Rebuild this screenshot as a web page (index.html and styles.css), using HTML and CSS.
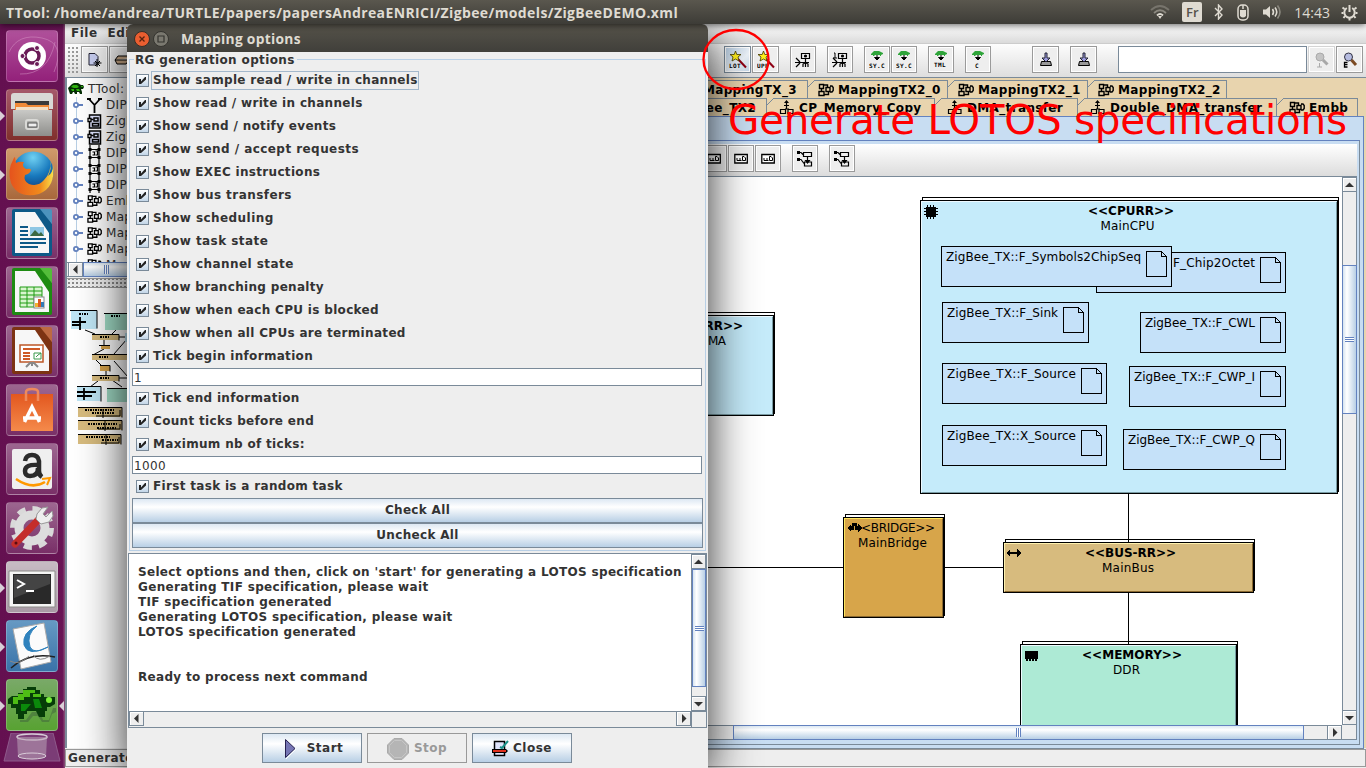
FILE: index.html
```html
<!DOCTYPE html>
<html lang="en">
<head>
<meta charset="utf-8">
<title>TTool - Mapping options</title>
<link rel="stylesheet" href="styles.css">
</head>
<body>
<svg class="defs" width="0" height="0">
  <defs>
    <linearGradient id="drawer" x1="0" y1="0" x2="0" y2="1"><stop offset="0" stop-color="#c9c9c6"/><stop offset="1" stop-color="#8e8e8b"/></linearGradient>
    <radialGradient id="globe" cx=".5" cy=".15" r=".9"><stop offset="0" stop-color="#6fd0f2"/><stop offset=".5" stop-color="#1879bd"/><stop offset="1" stop-color="#0b2c6b"/></radialGradient>
    <linearGradient id="fox" x1="0" y1="0" x2="1" y2="0"><stop offset="0" stop-color="#e5531d"/><stop offset=".7" stop-color="#f08a1c"/><stop offset="1" stop-color="#fbe14b"/></linearGradient>
    <linearGradient id="bag" x1="0" y1="0" x2="0" y2="1"><stop offset="0" stop-color="#e2571f"/><stop offset="1" stop-color="#f58a4b"/></linearGradient>
  </defs>
  <symbol id="check" viewBox="0 0 11 11"><path d="M2 4h2v2.500L8 2h1v2.500L4 9H2z" fill="#222"/></symbol>
  <symbol id="map" viewBox="0 0 16 14"><path d="M1.500 1.500h4v4h-4zM1 8.500h5v4H1zM3.500 5.500v3M5.500 2h4v2.500M6 11.500h4.500V9M8 4.500h4v4H8zM12 3h2l1.200 1.500v3L14 9h-2" fill="none" stroke="#000" stroke-width="1.400"/></symbol>
  <symbol id="act" viewBox="0 0 16 16"><path d="M7.500 1v8M5 5.500h5M1.500 9.500h5v4h-5zM9 9.500h5v4H9zM6 9h4" fill="none" stroke="#000" stroke-width="1.200"/><path d="M7.500 0l2.500 3H5z"/></symbol>
  <symbol id="knob" viewBox="0 0 10 8"><circle cx="3" cy="4" r="2.100" fill="#fff" stroke="#6382bf" stroke-width="1.800"/><path d="M5 4h5" stroke="#6382bf" stroke-width="2"/></symbol>
  <symbol id="turtle" viewBox="0 0 16 12"><path d="M0 5l2-2 2-2 2-1h4l3 2h2l1 2-1 2h-2l1 3v2h-2l-1-2H9v2H7L6 9H5l-1 2H2L1 8z" fill="#063006"/><path d="M3 4l2-2h4l2 2-2 1H6zM13 3h2v1h-2zM3 6h3v2H4zM8 6h3l1 2H9z" fill="#2fb30f"/></symbol>
  <symbol id="req" viewBox="0 0 14 16"><path d="M2.500 0v16M11.500 0v16M2 4.500h10M2 12.500h10M5 7h2v3H5M8 6h2v4H8" fill="none" stroke="#000" stroke-width="1.200"/><path d="M1 3h3v3H1zM10 3h3v3h-3zM1 11h3v3H1zM10 11h3v3h-3z"/></symbol>
  <symbol id="cls" viewBox="0 0 14 15"><path d="M2 1h11v13H2zM5 9.500h6V12H5zM6.500 4h4v3h-4z" fill="#dfe4ff" stroke="#000" stroke-width="1.500"/><path d="M.5 4.500h3v3h-3zM3 5.500h3" stroke="#000" fill="#fff" stroke-width="1.300"/></symbol>
  <symbol id="cgen" viewBox="0 0 16 16"><path d="M2 4l2-2 1-1h5l2 1 2 1v1l-2 1v1h-1V5H6L5 6H4V5H2z" fill="#2fa53a"/><path d="M8 5v2M5.500 7.500L8 10l2.500-2.500z" stroke="#000" fill="#000"/></symbol>
  <symbol id="sim" viewBox="0 0 16 16"><path d="M6.500 1.500h8v5h-8zM10.500 7v8M4 10.500h10M1 6l4 4M1 15l4-4M0 10.500h4M8 15v-3l2-1M13 15v-3l-2-1" fill="none" stroke="#000" stroke-width="1.200"/><circle cx="10.500" cy="4" r="1.600"/></symbol>
  <symbol id="save" viewBox="0 0 14 16"><path d="M2.500 9.500h9l1 4h-11z" fill="#999" stroke="#000"/><path d="M6 1h2v5h3l-4 4-4-4h3z" fill="#9c9ce0" stroke="#223"/></symbol>
  <symbol id="art" viewBox="0 0 14 12"><path d="M.8 1.500h12.500v8.500H.8z" fill="#fff" stroke="#000" stroke-width="1.300"/><path d="M3 5v2.500h3V5M8.500 3.500v4h3V5l-1.500-1.500zM6 7.500h1.500" fill="none" stroke="#000"/></symbol>
  <symbol id="link" viewBox="0 0 16 16"><path d="M6.500 1.500h8v4h-8zM7.500 11h7v4h-7zM1 1.500h3l2 2M1 8.500h3l3 4M10.500 6v6" fill="none" stroke="#000" stroke-width="1.200"/><path d="M0 0h3v3H0zM0 7h3v3H0zM7.500 9h6l-3 4z"/></symbol>
  <symbol id="find" viewBox="0 0 16 16"><circle cx="6.500" cy="5" r="4" fill="#b6bce0" stroke="#334"/><path d="M9.500 8l4.500 5" stroke="#7b4a22" stroke-width="3"/><path d="M5.500 10.500H2.500v4.500h3M2.500 12.700h3" fill="none" stroke="#000" stroke-width="1.300"/></symbol>
  <symbol id="findgray" viewBox="0 0 16 16"><circle cx="6" cy="5" r="4" fill="#c4c4c4" stroke="#aaa"/><path d="M9 8l4.500 4.500" stroke="#a8a8a8" stroke-width="3"/><path d="M3 15h5M5.500 11v4" stroke="#aaa"/></symbol>
  <symbol id="star" viewBox="0 0 18 18"><path d="M9 8l8 8.500" stroke="#8e0014" stroke-width="2"/><path d="M6.500 0l1.300 3.500H12L9 6l1 4-3.500-2L3 10l1-4-3-2.500h4.200z" fill="#ffee1c" stroke="#443800" stroke-width=".8"/></symbol>
  <symbol id="up" viewBox="1 1 13 13"><path d="M3 10h9L7.500 5.500z" fill="#333"/></symbol>
  <symbol id="down" viewBox="1 1 13 13"><path d="M3 6h9l-4.500 4.500z" fill="#333"/></symbol>
  <symbol id="left" viewBox="1 1 13 13"><path d="M9.500 3v9L5 7.500z" fill="#333"/></symbol>
  <symbol id="right" viewBox="1 1 13 13"><path d="M6 3v9l4.500-4.500z" fill="#333"/></symbol>
  <symbol id="page" viewBox="0 0 22 26"><path d="M.5.5h15l5 5v20h-20zM15.500.5v5h5" fill="none" stroke="#000"/></symbol>
</svg>

<header class="panel">
  <span class="panel-title">TTool: /home/andrea/TURTLE/papers/papersAndreaENRICI/Zigbee/models/ZigBeeDEMO.xml</span>
  <div class="tray">
    <svg class="wifi" width="20" height="14" viewBox="0 0 20 14" fill="none" stroke-width="1.800"><path d="M1 5q9-8 18 0" stroke="#77746c"/><path d="M4 8q6-5.500 12 0" stroke="#8b887f"/><path d="M7 10.500q3-3 6 0" stroke="#dfdbd2"/><path d="M8 11h4l-2 3z" fill="#dfdbd2"/></svg>
    <span class="lang">Fr</span>
    <svg class="bt" width="10" height="16" viewBox="0 0 10 16" fill="none" stroke="#dfdbd2" stroke-width="1.400"><path d="M1 4l7 7-3.500 4V1L8 5l-7 7"/></svg>
    <svg class="mouse" width="12" height="17" viewBox="0 0 12 17"><rect x="1" y="1" width="10" height="15" rx="4" fill="none" stroke="#dfdbd2" stroke-width="1.500"/><path d="M3 6h6v6q-3 3-6 0z" fill="#dfdbd2"/><path d="M6 1v4" stroke="#dfdbd2" stroke-width="1.500"/></svg>
    <svg class="vol" width="20" height="16" viewBox="0 0 20 16"><path d="M1 5.500h3L8 2v12l-4-3.500H1z" fill="#dfdbd2"/><path d="M10.500 5q2 3 0 6M13 3.500q3.500 4.500 0 9" fill="none" stroke="#dfdbd2" stroke-width="1.600"/><path d="M15.500 1.500q5 6.500 0 13" fill="none" stroke="#8b887f" stroke-width="1.600"/></svg>
    <span class="clock">14:43</span>
    <svg class="gear" width="17" height="17" viewBox="0 0 17 17" fill="none" stroke="#dfdbd2"><path d="M5.800 4a5.200 5.200 0 1 0 5.400 0M8.500 1v7" stroke-width="2"/><path d="M3.500 5L1.500 3.500M2.500 9H.5M4 12l-1.500 2M8.500 14v2.500M13 12l1.500 2M14.500 9h2M13.500 5l2-1.500" stroke-width="2"/></svg>
  </div>
</header>

<nav class="launcher">
  <div class="tile t-dash"><svg viewBox="0 0 52 52"><path d="M3 22Q12 3 36 8T48 42M49 12Q42 45 14 44" fill="none" stroke="#d595c5" opacity=".5"/><circle cx="26" cy="26" r="14" fill="#fff"/><circle cx="26" cy="26" r="7" fill="none" stroke="#6a1b57" stroke-width="3.500"/><g fill="#6a1b57" stroke="#fff"><circle cx="16.500" cy="26" r="2.500"/><circle cx="31" cy="18" r="2.500"/><circle cx="31" cy="34" r="2.500"/></g></svg></div>
  <div class="tile t-files run"><svg viewBox="0 0 52 52"><path d="M5 7q0-3 3-3h36q3 0 3 3v13H5z" fill="#d9d9d6"/><path d="M9 12h34v9H9z" fill="#3a3a3a"/><path d="M9 14h11l2 2h21v6H9z" fill="#f08a38"/><path d="M10 18h32v3H10z" fill="#f2dfc6"/><path d="M7 21h39v26H7z" fill="url(#drawer)"/><rect x="20" y="31" width="12" height="9" rx="2" fill="none" stroke="#d9d9d6" stroke-width="2"/><rect x="22" y="34" width="9" height="4" fill="#eee" stroke="#555"/></svg></div>
  <div class="tile t-fox run"><svg viewBox="0 0 52 52"><circle cx="27" cy="24" r="20.500" fill="url(#globe)"/><path d="M44 12q2 9-2 16 5-3 5-11 3 22-14 29Q12 51 5 35 1 22 7 12q1-3 2-3l1 6q3-2 8-1-3 4 2 7 5-1 5 1-1 4-6 5-2 6 4 9 9 3 15-4 8-8 6-20z" fill="url(#fox)"/></svg></div>
  <div class="tile"><svg viewBox="0 0 52 52"><path d="M8 2h28l10 15v30q0 2-2 2H8q-2 0-2-2V4q0-2 2-2z" fill="#0d5987"/><path d="M34 2h10q2 0 2 2v13z" fill="#4b93bd"/><path d="M9 5h20l14 21v20H9z" fill="#f7f7f7"/><path d="M14 20h8M14 24h8M14 28h8M14 32h26M14 36h26M14 40h18" stroke="#0d5987" stroke-width="2"/><rect x="24" y="20" width="14" height="9" fill="#8fc7e4"/><path d="M24 29l5-6 4 4 2-2 3 4z" fill="#3d6941"/></svg></div>
  <div class="tile"><svg viewBox="0 0 52 52"><path d="M8 2h28l10 15v30q0 2-2 2H8q-2 0-2-2V4q0-2 2-2z" fill="#1e8b12"/><path d="M34 2h10q2 0 2 2v13z" fill="#54bd3a"/><path d="M9 5h20l14 21v20H9z" fill="#f7f7f7"/><path d="M14 21h22v20H14zM14 25h22M14 29h22M14 33h22M14 37h22M21 21v20M28 21v20" fill="#d9f5cf" stroke="#1e9b12"/><rect x="28" y="31" width="10" height="11" fill="#fff" stroke="#888"/><path d="M29 37h3v4h-3z" fill="#f0b32e"/><path d="M32 33h3v8h-3z" fill="#dc5a22"/><path d="M35 36h3v5h-3z" fill="#317ab5"/></svg></div>
  <div class="tile"><svg viewBox="0 0 52 52"><path d="M8 2h28l10 15v30q0 2-2 2H8q-2 0-2-2V4q0-2 2-2z" fill="#7d3313"/><path d="M34 2h10q2 0 2 2v13z" fill="#bd6a42"/><path d="M9 5h20l14 21v20H9z" fill="#f7f7f7"/><rect x="14" y="20" width="23" height="17" fill="#fff" stroke="#bd5727" stroke-width="1.500"/><path d="M17 24h17M17 28h7M17 31h7M17 34h7" stroke="#cf5a26" stroke-width="2"/><path d="M28 34v-6h7v6zM30 32l2-2 3-2" fill="#fff" stroke="#3b9a4d"/><path d="M26 37v4M20 42l4-4h4l4 4" stroke="#888" stroke-width="2" fill="none"/></svg></div>
  <div class="tile"><svg viewBox="0 0 52 52"><path d="M5 10h42v37H5z" fill="url(#bag)"/><path d="M20 17V8q0-3 6-3t6 3v9" fill="none" stroke="#ee8a5c" stroke-width="2.500"/><path d="M18.500 38l7.500-15 7.500 15M17 34h18" fill="none" stroke="#fff" stroke-width="3.500"/></svg></div>
  <div class="tile"><svg viewBox="0 0 52 52"><rect x="6" y="6" width="40" height="40" rx="2" fill="#efefef"/><path d="M19 18q1-6 7-6t7 6v10q0 4 3 6M32 22q-13-1-13 6 0 5 5 5 8 0 8-8" fill="none" stroke="#2b2b2b" stroke-width="4.500"/><path d="M10 36q16 11 29 3" fill="none" stroke="#f90" stroke-width="2.500"/><path d="M36 36l8-1-3 7" fill="none" stroke="#f90" stroke-width="2"/></svg></div>
  <div class="tile"><svg viewBox="0 0 52 52"><circle cx="26" cy="26" r="19" fill="none" stroke="#d9d9d9" stroke-width="6" stroke-dasharray="8 6.900"/><circle cx="26" cy="26" r="13" fill="none" stroke="#ddd" stroke-width="9"/><path d="M9 42l26-27" stroke="#c42d2a" stroke-width="7" stroke-linecap="round"/><path d="M30 17l5 5 8-2 4-6-1-5-6 6-3-3 5-7-6 1-5 6z" fill="#eee" stroke="#999"/><circle cx="10" cy="41" r="1.500" fill="#5a0b10"/></svg></div>
  <div class="tile t-term run"><svg viewBox="0 0 52 52"><path d="M3 10h46v36H3z" fill="#f5f5f4" stroke="#8b8b88"/><path d="M7 13h38v30H7z" fill="#292929"/><path d="M8 14h36v9L8 37z" fill="#444"/><path d="M11 19l7 4-7 4M20 30h8" fill="none" stroke="#fff" stroke-width="2"/></svg></div>
  <div class="tile t-doc run"><svg viewBox="0 0 52 52"><path d="M7 9l31-6 7 39-30 7z" fill="#fbfbfb" stroke="#aaa"/><path d="M31 6Q16 12 18 25q4 12 24 2-14 8-18 0-4-13 7-21z" fill="#2f82bd" stroke="#2f82bd"/><path d="M5 48Q22 32 49 37" fill="none" stroke="#222" stroke-width="1.500"/><path d="M4 41q5 3 10 1t9-6M27 35q6 8 17 1" fill="none" stroke="#888"/></svg></div>
  <div class="tile t-ttool run active"><svg viewBox="0 0 52 52"><path d="M14 41h6l6-8h8l3 8h6l4-12h3v4l-4 2-3 8h-7l-4-6h-5l-5 6h-8z" fill="#456d3c" opacity=".6"/><path d="M2 20l4-3h6v-3h5v-4h4V8h9v3h4v4h4v3h11v7l-5 3h-3v4h-2v6h-6l-3-6h-9v3h-3v5h-6v-5h-2v-6H5v-4H2z" fill="#063d08"/><path d="M7 18h5v-3h5v-4h12v3h-5v4h-6v3h-6v4H7zM27 15h8v3h-8z" fill="#4ebd15"/><path d="M15 25h10l-6 7h-4zM27 20h6l3 9h-7z" fill="#0b8a0b"/><circle cx="43" cy="21" r="3" fill="#7cf13a"/></svg></div>
  <div class="trash"><svg viewBox="0 0 58 30"><path d="M8 0h42l7 28H1z" fill="#7b3c76" stroke="#8f5a8b"/><ellipse cx="29" cy="4" rx="15" ry="3" fill="none" stroke="#d9cbd8" stroke-width="1.500"/><path d="M14 4l1 20q14 5 28 0l1-20" fill="#b9a3b7" opacity=".55"/><ellipse cx="29" cy="23" rx="14" ry="3" fill="none" stroke="#d9cbd8"/></svg></div>
</nav>

<main class="app">
  <div class="menubar"><span>File</span><span>Edit</span></div>
  <div class="toolbar">
    <i class="grip"></i>
    <button class="tb"><svg width="15" height="16" viewBox="0 0 15 16"><path d="M2 1.500h6l3 3V13H2z" fill="#c7cdf0" stroke="#223"/><path d="M10 7v8M6.500 11h8M8 9l5 5M13 9l-5 5" stroke="#000"/></svg></button>
    <button class="tb"><svg width="18" height="14" viewBox="0 0 18 14"><path d="M1 7l3-4h12v2M1 7h14l-3 4H3z" fill="#c9a987" stroke="#000"/></svg></button>
    <div class="tools">
      <button class="tb hot"><svg width="18" height="18"><use href="#star"/><text x="0" y="17" class="tiny">LOT</text></svg></button>
      <button class="tb g11"><svg width="18" height="18"><use href="#star"/><text x="0" y="17" class="tiny">UPP</text></svg></button>
      <button class="tb n g11"><svg width="16" height="16"><use href="#sim"/></svg></button>
      <button class="tb n g11"><svg width="16" height="16"><use href="#sim"/><path d="M2 1h1v5M1 6h4" fill="none" stroke="#000"/></svg></button>
      <button class="tb n"><svg width="16" height="18"><use href="#cgen" y="-1" height="16"/><text x="0" y="17" class="tiny">SY.C</text></svg></button>
      <button class="tb n g11"><svg width="16" height="18"><use href="#cgen" y="-1" height="16"/><text x="0" y="17" class="tiny">SY.C</text></svg></button>
      <button class="tb n g11"><svg width="16" height="18"><use href="#cgen" y="-1" height="16"/><text x="1" y="16" class="tiny">TML</text></svg></button>
      <button class="tb n g41"><svg width="16" height="18"><use href="#cgen" y="-1" height="16"/><text x="5" y="17" class="tiny">C</text></svg></button>
      <button class="tb g11"><svg width="14" height="16"><use href="#save"/></svg></button>
      <button class="tb g21"><svg width="14" height="16"><use href="#save"/></svg></button>
      <input class="search" aria-label="Search">
      <button class="tb off"><svg width="16" height="16"><use href="#findgray"/></svg></button>
      <button class="tb"><svg width="16" height="16"><use href="#find"/></svg></button>
    </div>
  </div>

  <div class="split">
    <aside class="side">
      <div class="tree">
        <div class="root"><svg width="16" height="12"><use href="#turtle"/></svg>TTool: models</div>
        <div class="node"><svg width="10" height="8"><use href="#knob"/></svg><svg width="15" height="15" viewBox="0 0 15 15"><path d="M0 1h4M11 1h4M2 1l5.500 6L13 1M7.500 7v8" fill="none" stroke="#000" stroke-width="1.800"/></svg>DIPLODOCUS</div>
        <div class="node"><svg width="10" height="8"><use href="#knob"/></svg><svg width="15" height="15"><use href="#cls"/></svg>ZigBee_TX</div>
        <div class="node"><svg width="10" height="8"><use href="#knob"/></svg><svg width="15" height="15"><use href="#cls"/></svg>ZigBee_TX2</div>
        <div class="node"><svg width="10" height="8"><use href="#knob"/></svg><svg width="15" height="16"><use href="#req"/></svg>DIPLODOCUS</div>
        <div class="node"><svg width="10" height="8"><use href="#knob"/></svg><svg width="15" height="16"><use href="#req"/></svg>DIPLODOCUS</div>
        <div class="node"><svg width="10" height="8"><use href="#knob"/></svg><svg width="15" height="16"><use href="#req"/></svg>DIPLODOCUS</div>
        <div class="node"><svg width="10" height="8"><use href="#knob"/></svg><svg width="15" height="14"><use href="#map"/></svg>Embb</div>
        <div class="node"><svg width="10" height="8"><use href="#knob"/></svg><svg width="15" height="14"><use href="#map"/></svg>MappingTX</div>
        <div class="node"><svg width="10" height="8"><use href="#knob"/></svg><svg width="15" height="14"><use href="#map"/></svg>MappingTX_0</div>
        <div class="node"><svg width="10" height="8"><use href="#knob"/></svg><svg width="15" height="14"><use href="#map"/></svg>MappingTX_1</div>
        <div class="node"><svg width="10" height="8"><use href="#knob"/></svg><svg width="15" height="14"><use href="#map"/></svg>MappingTX_2</div>
      </div>
      <div class="hbar"><svg class="arrow" width="15" height="15"><use href="#left"/></svg><div class="thumb side-thumb"><i class="ticks-h"></i></div></div>
      <div class="divider"></div>
      <div class="birdview">
        <svg width="62" height="190" viewBox="67 289 62 190">
          <path d="M85 331l10 4M116 331l-4 4M104 341v5M104 350l-11 6M127 340l-13 15M96 361l6 6M106 371v5M114 362l14 16M98 382l-8 6M112 381l10 7M119 338h6M119 379h9" stroke="#000" fill="none"/>
          <g fill="#bfe6f5"><path d="M71 311h26v19H71zM77 387h24v15H77zM125 334h5v9h-5z"/></g>
          <g fill="#a1dcc6"><path d="M105 314h25v17h-25zM107 389h23v14h-23z"/></g>
          <g fill="#d7bb7e"><path d="M92 335h27v6H92zM92 355h38v6H92zM92 376h27v6H92zM78 408h44v10H78zM78 421h44v10H78zM78 435h43v10H78z"/></g>
          <path d="M101 346h9v4h-9zM100 366h10v6h-10z" fill="#d7a44b"/>
          <path d="M70 311.500h27v18M104 314.500h26M77 387.500h24v15M107 389.500h23M92 335.500h27v6M92 355.500h38M92 376.500h27v6M78 408.500h44v10M78 421.500h44v10M78 435.500h43v10M99 346.500h11M100 366.500h10v6M96 417h24v-6M98 430h22v-5M101 444h18v-6M103 410v9M105 422v10M106 436v10" fill="none" stroke="#000"/>
          <path d="M72 323h14M72 326h9M80 318v13M77 393h19M77 397h15M84 389v12" stroke="#000" stroke-width="1.800"/>
          <path d="M79 315h9M111 317h9M100 338h9M99 358h10M100 379h9M85 411h30M88 425h30M86 438h24M92 414h23M97 429h20M102 441h16" stroke="#000" stroke-width="2" stroke-dasharray="2 1 1 1"/>
        </svg>
      </div>
    </aside>

    <section class="work">
      <div class="tabs row1">
        <div class="tab"><svg width="16" height="14"><use href="#map"/></svg>MappingTX_3</div>
        <div class="tab w140"><svg width="16" height="14"><use href="#map"/></svg>MappingTX2_0</div>
        <div class="tab w140"><svg width="16" height="14"><use href="#map"/></svg>MappingTX2_1</div>
        <div class="tab w139"><svg width="16" height="14"><use href="#map"/></svg>MappingTX2_2</div>
      </div>
      <div class="tabs row2">
        <div class="tab"><svg width="16" height="14"><use href="#map"/></svg>ZigBee_TX2</div>
        <div class="tab w168"><svg width="16" height="16"><use href="#act"/></svg>CP_Memory_Copy</div>
        <div class="tab w143"><svg width="16" height="16"><use href="#act"/></svg>DMA_transfer</div>
        <div class="tab w199"><svg width="16" height="16"><use href="#act"/></svg>Double_DMA_transfer</div>
        <div class="tab w81"><svg width="16" height="14"><use href="#map"/></svg>Embb</div>
      </div>
      <div class="sheet">
        <div class="sheet-in">
          <div class="minitools">
            <button class="tb"><svg width="14" height="12"><use href="#art"/></svg></button>
            <button class="tb n"><svg width="14" height="12"><use href="#art"/></svg></button>
            <button class="tb n g11"><svg width="14" height="12"><use href="#art"/></svg></button>
            <button class="tb n g11"><svg width="16" height="16"><use href="#link"/></svg></button>
            <button class="tb n"><svg width="16" height="16"><use href="#link"/></svg></button>
          </div>
          <div class="view">
            <svg class="diagram" width="702" height="548" viewBox="640 177 702 548">
              <path d="M1128.500 493v48M1128.500 592v52M640 567.500h203M944 567.500h60" stroke="#000"/>
              <g fill="#fff" stroke="#000">
                <rect x="629.500" y="312.500" width="145" height="101"/><rect x="922.500" y="197.500" width="416" height="294"/>
                <rect x="845.500" y="514.500" width="99" height="101"/><rect x="1005.500" y="539.500" width="249" height="51"/><rect x="1022.500" y="641.500" width="215" height="120"/>
              </g>
              <path d="M1128.500 538v5M1128.500 641v4" stroke="#000"/>
              <g stroke="#000">
                <rect x="627.500" y="315.500" width="146" height="100" fill="#c5ebfa"/><rect x="920.500" y="200.500" width="417" height="293" fill="#c5ebfa"/>
                <rect x="843.500" y="517.500" width="100" height="100" fill="#d7a54a"/><rect x="1003.500" y="542.500" width="250" height="50" fill="#d7bb7e"/><rect x="1020.500" y="644.500" width="216" height="120" fill="#adead5"/>
              </g>
              <g fill="none" stroke-width="1">
                <path d="M921.500 492v-290.500H1336M628 316.500H772M1021.500 725v-79.500H1235" stroke="#eefaff"/><path d="M844.500 616v-97.500H942" stroke="#ffe75e"/><path d="M1004.500 591v-47.500H1252" stroke="#fff2ae"/>
                <path d="M1336.500 202v290.500H922M772.500 317v97.500H640M1235.500 646v80" stroke="#799ba3"/><path d="M942.500 519v97.500H845M1252.500 544v47.500H1005" stroke="#8a6930"/>
              </g>
              <g fill="#c5e1f9" stroke="#000">
                <rect x="1096.500" y="252.500" width="189" height="40"/><rect x="941.500" y="246.500" width="230" height="40"/><rect x="942.500" y="302.500" width="146" height="40"/><rect x="942.500" y="363.500" width="164" height="40"/><rect x="942.500" y="425.500" width="164" height="40"/>
                <rect x="1140.500" y="312.500" width="145" height="40"/><rect x="1129.500" y="366.500" width="156" height="40"/><rect x="1123.500" y="429.500" width="162" height="40"/>
              </g>
              <use href="#page" x="1146" y="251" width="22" height="26"/><use href="#page" x="1260" y="257" width="22" height="26"/><use href="#page" x="1063" y="307" width="22" height="26"/><use href="#page" x="1081" y="368" width="22" height="26"/><use href="#page" x="1081" y="430" width="22" height="26"/><use href="#page" x="1260" y="317" width="22" height="26"/><use href="#page" x="1260" y="371" width="22" height="26"/><use href="#page" x="1260" y="434" width="22" height="26"/>
              <path d="M926 207h10v10h-10z"/><path d="M924 208.500h14M924 211.500h14M924 214.500h14M927.500 205v14M930.500 205v14M933.500 205v14" stroke="#000" stroke-width="1.500"/>
              <path d="M847 528l4-4v2h1v-3h5v3h1v-2l4 4-4 4v-2h-3v-4h-1v4h-3v2z"/><path d="M1006 553l4-4v3h7v-3l4 4-4 4v-3h-7v3z"/>
              <path d="M1025 651h13v8h-13zM1026 659h2v2h-2zM1029 659h2v2h-2zM1032 659h2v2h-2zM1035 659h2v2h-2z"/>
              <g class="dt">
                <text x="946" y="261" textLength="195">ZigBee_TX::F_Symbols2ChipSeq</text><text x="1173" y="267" textLength="82">F_Chip2Octet</text>
                <text x="947" y="317" textLength="111">ZigBee_TX::F_Sink</text><text x="947" y="378" textLength="129">ZigBee_TX::F_Source</text><text x="947" y="440" textLength="129">ZigBee_TX::X_Source</text>
                <text x="1145" y="327" textLength="110">ZigBee_TX::F_CWL</text><text x="1134" y="381" textLength="121">ZigBee_TX::F_CWP_I</text><text x="1128" y="444" textLength="127">ZigBee_TX::F_CWP_Q</text>
                <text x="1100.500" y="230" textLength="54">MainCPU</text><text x="673" y="345" textLength="53">MainDMA</text>
                <text x="861" y="532" textLength="74">&lt;BRIDGE&gt;&gt;</text><text x="858" y="547" textLength="69">MainBridge</text><text x="1102" y="572" textLength="52">MainBus</text><text x="1113" y="674" textLength="27">DDR</text>
              </g>
              <g class="dt bold">
                <text x="1088" y="215" textLength="86">&lt;&lt;CPURR&gt;&gt;</text><text x="657" y="330" textLength="86">&lt;&lt;CPURR&gt;&gt;</text><text x="1085" y="557" textLength="91">&lt;&lt;BUS-RR&gt;&gt;</text><text x="1082" y="659" textLength="100">&lt;&lt;MEMORY&gt;&gt;</text>
              </g>
            </svg>
            <div class="vbar"><svg class="arrow" width="15" height="15"><use href="#up"/></svg><div class="track main-v"><div class="thumb"><i class="ticks-v"></i></div></div><svg class="arrow" width="15" height="15"><use href="#down"/></svg></div>
            <div class="hbar main-h"><div class="thumb"><i class="ticks-h"></i></div><svg class="arrow" width="15" height="15"><use href="#right"/></svg></div>
            <div class="corner"></div>
          </div>
        </div>
      </div>
    </section>
  </div>
  <footer class="status">Generated LOTOS specification</footer>
</main>

<section class="dialog">
  <div class="titlebar"><svg width="36" height="16" viewBox="0 0 36 16"><circle cx="8" cy="8" r="7.500" fill="#ea5e30" stroke="#35302a"/><path d="M5.500 5.500l5 5M10.500 5.500l-5 5" stroke="#56230f" stroke-width="1.300"/><circle cx="27" cy="8" r="7.500" fill="#7b7970" stroke="#35342f"/><path d="M24 5h6v6h-6z" fill="none" stroke="#35342f" stroke-width="1.200"/></svg><span>Mapping options</span></div>
  <div class="body">
    <div class="group">
      <div class="legend">RG generation options</div>
      <label class="opt focus"><svg><use href="#check"/></svg><span>Show sample read / write in channels</span></label>
      <label class="opt"><svg><use href="#check"/></svg><span>Show read / write in channels</span></label>
      <label class="opt"><svg><use href="#check"/></svg><span>Show send / notify events</span></label>
      <label class="opt wider"><svg><use href="#check"/></svg><span>Show send / accept requests</span></label>
      <label class="opt"><svg><use href="#check"/></svg><span>Show EXEC instructions</span></label>
      <label class="opt wider"><svg><use href="#check"/></svg><span>Show bus transfers</span></label>
      <label class="opt wider"><svg><use href="#check"/></svg><span>Show scheduling</span></label>
      <label class="opt wider"><svg><use href="#check"/></svg><span>Show task state</span></label>
      <label class="opt wider"><svg><use href="#check"/></svg><span>Show channel state</span></label>
      <label class="opt"><svg><use href="#check"/></svg><span>Show branching penalty</span></label>
      <label class="opt"><svg><use href="#check"/></svg><span>Show when each CPU is blocked</span></label>
      <label class="opt"><svg><use href="#check"/></svg><span>Show when all CPUs are terminated</span></label>
      <label class="opt"><svg><use href="#check"/></svg><span>Tick begin information</span></label>
      <div class="field">1</div>
      <label class="opt"><svg><use href="#check"/></svg><span>Tick end information</span></label>
      <label class="opt"><svg><use href="#check"/></svg><span>Count ticks before end</span></label>
      <label class="opt"><svg><use href="#check"/></svg><span>Maximum nb of ticks:</span></label>
      <div class="field">1000</div>
      <label class="opt"><svg><use href="#check"/></svg><span>First task is a random task</span></label>
      <button class="wide">Check All</button>
      <button class="wide">Uncheck All</button>
    </div>
    <div class="console">
      <pre class="log">Select options and then, click on 'start' for generating a LOTOS specification
Generating TIF specification, please wait
TIF specification generated
Generating LOTOS specification, please wait
LOTOS specification generated


Ready to process next command</pre>
      <div class="vbar"><svg class="arrow" width="15" height="15"><use href="#up"/></svg><div class="track log-v"><div class="thumb"><i class="ticks-v"></i></div></div><svg class="arrow" width="15" height="15"><use href="#down"/></svg></div>
      <div class="hbar log-h"><svg class="arrow" width="15" height="15"><use href="#left"/></svg><div class="track"></div><svg class="arrow" width="15" height="15"><use href="#right"/></svg></div>
      <div class="corner"></div>
    </div>
    <div class="actions">
      <button class="act"><svg width="16" height="22" viewBox="0 0 16 22"><path d="M4.500 1.500v18L14 10.500z" fill="#7575b4" stroke="#262050"/><path d="M5 21l10-10" stroke="#fff"/></svg>Start</button>
      <button class="act off"><svg width="22" height="22" viewBox="0 0 22 22"><path d="M7 .5h8L21.500 7v8L15 21.500H7L.5 15V7z" fill="#b5b5b5" stroke="#aaa"/><path d="M7.500 2.500h7l5 5v7l-5 5h-7l-5-5v-7z" fill="none" stroke="#c6c6c6"/></svg>Stop</button>
      <button class="act"><svg width="17" height="17" viewBox="0 0 17 17"><path d="M2.500 1.500h10v14h-10z" fill="#dfe4fb" stroke="#000" stroke-width="1.500"/><path d="M0 9h14l2 2-2 2H0z" fill="#000"/><path d="M1 11h13" stroke="#e0301c" stroke-width="2"/><path d="M8 7l2 1 6-7" stroke="#188f86" stroke-width="2" fill="none"/></svg>Close</button>
    </div>
  </div>
</section>

<svg class="notes" width="1366" height="160" viewBox="0 0 1366 160">
  <ellipse cx="736" cy="59.500" rx="32.500" ry="29.500" fill="none" stroke="#f00" stroke-width="2.300"/>
  <text x="728" y="134" textLength="619">Generate LOTOS specifications</text>
</svg>
</body>
</html>
```
FILE: styles.css
```css
* { box-sizing: border-box; }
body { margin: 0; width: 1366px; height: 768px; overflow: hidden; position: relative; background: #eee; display: grid; grid-template: 24px 744px / 65px 1301px; font: bold 12px/15px "DejaVu Sans", sans-serif; letter-spacing: .32px; color: #333; }
button { font: inherit; letter-spacing: inherit; color: inherit; padding: 0; margin: 0; }
svg { display: block; flex: none; }
.defs { position: absolute; }

/* top panel */
.panel { grid-column: 1 / 3; position: relative; z-index: 5; display: flex; align-items: center; justify-content: space-between; padding: 0 8px 0 6px; background: linear-gradient(#5a574e, #3d3c37); box-shadow: 0 1px 7px rgba(0,0,0,.65); color: #dfdbd2; }
.panel-title { font: bold 14px "Open Sans", sans-serif; letter-spacing: .38px; }
.tray { display: flex; align-items: center; }
.lang { width: 20px; height: 20px; margin: 0 12px 0 12px; border-radius: 2px; background: #dfdbd2; color: #55524b; font: 600 13px/20px "Open Sans", sans-serif; text-align: center; letter-spacing: 0; }
.mouse { margin-left: 13px; }
.vol { margin-left: 13px; }
.clock { margin: 0 11px 0 12px; font: 14px "Open Sans", sans-serif; letter-spacing: 0; }

/* launcher */
.launcher { position: relative; z-index: 4; padding: 6px 0 0 6px; background: linear-gradient(90deg, #641050, #681454 96%, #8a5079); display: flex; flex-direction: column; gap: 7px; }
.tile { position: relative; flex: none; width: 52px; height: 52px; border-radius: 4px; border: 1px solid rgba(255,255,255,.2); background: linear-gradient(rgba(255,255,255,.36), rgba(255,255,255,.12)); }
.tile svg { width: 52px; height: 52px; margin: -1px; }
.t-dash { background: linear-gradient(#b0519b, #93217a); }
.t-files { background: linear-gradient(#a5586a, #80302c); }
.t-fox { background: linear-gradient(#d09a6b, #a8683c); }
.t-term { background: linear-gradient(#c7bbc4, #a99aa5); }
.t-doc { background: linear-gradient(#6699c3, #3a73a8); }
.t-ttool { background: linear-gradient(#79a968, #58a232); }
.run::before { content: ""; position: absolute; left: -7px; top: 21px; border: 5px solid transparent; border-left-color: #d9cfd7; border-right: 0; }
.active::after { content: ""; position: absolute; right: -7px; top: 21px; border: 5px solid transparent; border-right-color: #d9cfd7; border-left: 0; }
.trash { width: 58px; height: 30px; margin: -5px 0 0 -3px; }

/* main window */
.app { display: flex; flex-direction: column; overflow: hidden; background: #eee; }
.menubar { height: 20px; padding: 2px 6px; display: flex; gap: 10px; letter-spacing: .5px; background: linear-gradient(#fff, #dadada); border-bottom: 1px solid #ccc; }
.toolbar { height: 33px; padding: 2px 3px 0 2px; display: flex; background: linear-gradient(#fdfdfd, #dedede); }
.grip { width: 11px; height: 28px; margin-right: 3px; background: radial-gradient(#999 25%, transparent 30%) 0 0 / 4px 4px; }
.tb { flex: none; width: 27px; height: 27px; margin-right: 1px; border: 1px solid #9a9a9a; box-shadow: inset 0 0 0 1px #fff; background: #eee; display: flex; align-items: center; justify-content: center; }
.n { width: 26px; }
.hot { border-color: #7a8a99; background: linear-gradient(135deg, #b8cfe5, #eef4fa 60%, #c4d7ea); }
.g11 { margin-right: 11px; }
.g21 { margin-right: 21px; }
.g41 { margin-right: 41px; }
.toolbar .off { border-color: #d4d4d4; }
.tools { margin-left: auto; display: flex; }
.toolbar .tools .tb:last-child { margin-right: 0; }
.tiny { font: bold 6px "DejaVu Sans Mono", monospace; letter-spacing: .4px; fill: #000; }
.search { width: 189px; height: 27px; border: 1px solid #7a8a99; background: #fff; margin-right: 1px; padding: 0; }

.split { height: 671px; display: flex; border-top: 1px solid #7a8a99; }
.side { width: 575px; border-left: 2px solid #7a8a99; display: flex; flex-direction: column; }
.tree { height: 184px; padding-top: 3px; background: #fff; overflow: hidden; font: 12px/16px "DejaVu Sans", sans-serif; letter-spacing: .3px; }
.root, .node { height: 16px; display: flex; align-items: center; white-space: nowrap; }
.root { gap: 4px; padding-left: 1px; }
.node { margin-left: 9px; gap: 4px; border-left: 1px solid #b8cfe5; }
.node svg:first-child { margin-left: -4px; }

.hbar, .vbar { display: flex; background: #eee; }
.vbar { flex-direction: column; width: 15px; border-left: 1px solid #7a8a99; border-right: 1px solid #7a8a99; }
.hbar { height: 15px; border-top: 1px solid #7a8a99; border-bottom: 1px solid #7a8a99; }
.hbar .arrow, .vbar .arrow { background: #eee; border: 1px solid #7a8a99; box-shadow: inset 1px 1px #fff; }
.vbar .arrow { margin-left: -1px; }
.hbar .arrow { margin-top: -1px; }
.thumb { border: 1px solid #6382bf; background: linear-gradient(90deg, #d5e3f0, #fff 30%, #b8cfe5); display: flex; align-items: center; justify-content: center; }
.hbar .thumb { background: linear-gradient(#dce8f3, #fff 30%, #b8cfe5); }
.ticks-v { width: 9px; height: 5px; background: repeating-linear-gradient(#6382bf 0 1px, #fff 1px 2px); }
.ticks-h { width: 5px; height: 9px; background: repeating-linear-gradient(90deg, #6382bf 0 1px, #fff 1px 2px); }
.side .hbar { padding-left: 1px; }
.side-thumb { width: 47px; }
.side .hbar .thumb { margin: -1px 0; }
.divider { height: 10px; margin-top: 1px; background: radial-gradient(#888 25%, transparent 30%) 0 2px / 4px 4px #eee; border-bottom: 1px solid #999; border-top: 1px solid #999; }
.birdview { flex: 1; background: #fff; }

.work { width: 726px; padding-right: 2px; background: #e8d4ae; display: flex; flex-direction: column; }
.tabs { height: 18px; display: flex; justify-content: flex-end; color: #000; }
.row1 { margin-top: 2px; padding-right: 137px; }
.row2 { padding-right: 6px; }
.tab { position: relative; flex: none; height: 18px; display: flex; align-items: center; gap: 4px; padding: 1px 10px 0; border-top: 1px solid #7a8a99; border-right: 1px solid #7a8a99; background: #e8d4ae; white-space: nowrap; letter-spacing: .35px; }
.tab::before { content: ""; position: absolute; left: 0; top: -1px; width: 7px; height: 7px; background: linear-gradient(135deg, #e8d4ae 46%, #7a8a99 46% 56%, #e8d4ae 56%); }
.row2 .tab { padding-left: 12px; }
.w140 { width: 140px; } .w139 { width: 139px; } .w168 { width: 168px; } .w143 { width: 143px; } .w199 { width: 199px; } .w81 { width: 81px; }
.sheet { flex: 1; padding: 23px 3px 3px 0; background: #c8ddf2; border: 1px solid #6382bf; border-left: 0; border-bottom-color: #7a8a99; }
.sheet-in { height: 605px; border-top: 1px solid #6382bf; border-right: 1px solid #7a8a99; border-bottom: 1px solid #7a8a99; padding: 3px 2px 0 0; }
.minitools { height: 33px; padding: 1px 0 0 60px; display: flex; background: linear-gradient(#fff, #dcdcdc); border-bottom: 1px solid #7a8a99; }
.view { display: grid; grid-template: 548px 15px / 702px 15px; background: #fff; }
.main-v { flex: 1; padding-top: 73px; }
.main-v .thumb { height: 149px; margin: 0 -1px; }
.track { flex: 1; }
.main-h { padding-left: 93px; }
.main-h .thumb { width: 571px; margin: -1px 23px -1px 0; }
.corner { background: #eee; border-right: 1px solid #7a8a99; border-bottom: 1px solid #7a8a99; }
.diagram { shape-rendering: crispEdges; }
.dt { font: 12px "DejaVu Sans", sans-serif; letter-spacing: 0; fill: #000; }
.dt.bold { font-weight: bold; }
.status { margin-top: 1px; height: 18px; padding-left: 2px; line-height: 17px; border: 1px solid #999; background: #eee; letter-spacing: .4px; }

/* dialog window */
.dialog { position: absolute; z-index: 3; left: 127px; top: 24px; width: 581px; height: 744px; background: #eee; box-shadow: 0 10px 48px rgba(0,0,0,.85); border-radius: 6px 6px 0 0; }
.titlebar { height: 28px; display: flex; align-items: center; gap: 11px; padding: 1px 0 0 7px; border-radius: 6px 6px 0 0; background: linear-gradient(#57544b, #403f3a); color: #dfdbd2; font: bold 13.800px "Open Sans", sans-serif; letter-spacing: .3px; }
.body { padding-left: 1px; }
.group { position: relative; height: 499px; padding: 17px 5px 0 4px; }
.group::before { content: ""; position: absolute; left: 1px; right: 2px; top: 7px; bottom: 0; border: 1px solid #b8cfe5; }
.legend { position: absolute; left: 6px; top: 1px; padding: 0 2px 0 1px; background: #eee; letter-spacing: .36px; }
.opt { position: relative; height: 23px; padding-left: 4px; display: flex; align-items: center; gap: 3px; }
.opt svg { width: 13px; height: 13px; border: 1px solid #7a8a99; background: linear-gradient(#fff, #c3d6e8); }
.opt span { height: 17px; line-height: 17px; padding: 0 0 0 1px; }
.wider { letter-spacing: .44px; }
.focus span { box-shadow: 0 0 0 1px #a3b8cc; }
.field { position: relative; height: 18px; width: 570px; margin-bottom: 1px; padding-left: 1px; border: 1px solid #7a8a99; background: #fff; font: 12px/18px "DejaVu Sans", sans-serif; letter-spacing: .4px; }
.wide { position: relative; display: block; width: 571px; height: 25px; border: 1px solid #7a8a99; background: linear-gradient(#dde8f3, #fff 35%, #b8cfe5); }
.console { width: 579px; height: 175px; margin-top: 2px; border: 1px solid #7a8a99; display: grid; grid-template: 157px 16px / 562px 15px; background: #fff; }
.log { margin: 0; padding: 11px 0 0 9px; font: inherit; }
.console .vbar { border-right: 0; }
.console .hbar { height: 16px; border-bottom: 0; }
.log-v .thumb { height: 118px; }
.console .corner { border: 0; border-left: 1px solid #7a8a99; border-top: 1px solid #7a8a99; }
.actions { display: flex; gap: 5px; padding: 5px 0 0 134px; }
.act { width: 100px; height: 30px; padding-top: 1px; display: flex; align-items: center; justify-content: center; gap: 10px; letter-spacing: .5px; border: 1px solid #7a8a99; background: linear-gradient(#dde8f3, #fff 35%, #b8cfe5); }
.act.off { color: #999; border-color: #999; background: #eee; gap: 5px; }
.act:last-child { gap: 4px; }

/* callout drawn over the desktop */
.notes { position: absolute; z-index: 9; left: 0; top: 0; pointer-events: none; }
.notes text { font: 40.500px "DejaVu Sans", sans-serif; letter-spacing: 0; fill: #f00; }
```
